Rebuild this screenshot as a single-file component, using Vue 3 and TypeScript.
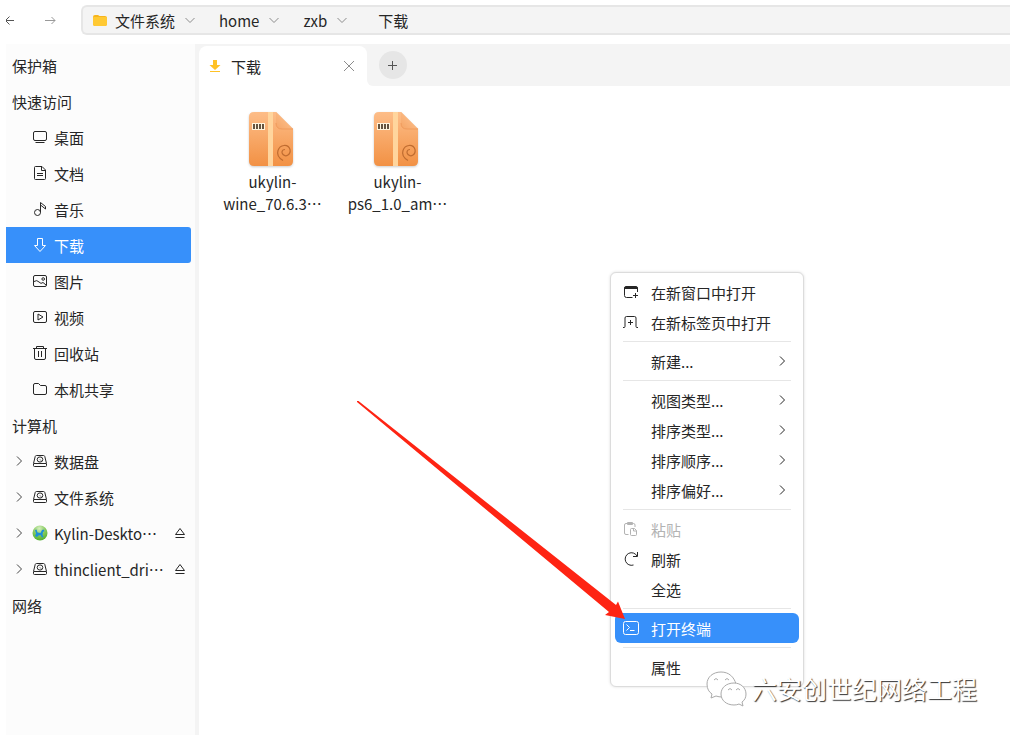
<script setup lang="ts">
interface Place {
  label: string
  icon?: string
  heading?: boolean
  active?: boolean
  expandable?: boolean
  ejectable?: boolean
}
interface MenuItem {
  label: string
  icon?: string
  submenu?: boolean
  disabled?: boolean
  active?: boolean
}

const icons: Record<string, string> = {
  desktop: 'M3 2.500h10q1.500 0 1.500 1.500v6q0 1.500-1.500 1.500H3Q1.500 11.500 1.500 10V4Q1.500 2.500 3 2.500zM3.500 13.500h9',
  document: 'M3.500 1.500H10l3.500 3.500v8.500q0 1-1 1h-9q-1 0-1-1v-11q0-1 1-1zM9.500 1.500v4h4M5 8.500h6M5 10.500h6',
  music: 'M8.500 11.500V1.500l5 4v2.500l-5-4M8.500 11.500a3 3 0 1 1-6 0a3 3 0 1 1 6 0z',
  download: 'M5.500 1.500h5v7h3L8 14.500 2.500 8.500h3z',
  picture: 'M3 2.500h10q1.500 0 1.500 1.500v8q0 1.500-1.500 1.500H3Q1.500 13.500 1.500 12V4Q1.500 2.500 3 2.500zM2 8.500q3-2 5 .5t4 .5l3 2.500M12.500 6a1.300 1.300 0 1 1-2.600 0a1.300 1.300 0 1 1 2.600 0z',
  video: 'M3 2.500h10q1.500 0 1.500 1.500v8q0 1.500-1.500 1.500H3Q1.500 13.500 1.500 12V4Q1.500 2.500 3 2.500zM6 5v6l5-3z',
  trash: 'M1 3.500h14M4.500 3.500v-2h7v2M2.500 3.500v9.500q0 1.500 1.500 1.500h8q1.500 0 1.500-1.500V3.500M6.500 6v6M9.500 6v6',
  folder: 'M3 2.500h3.500l2 2H13q1.500 0 1.500 1.500v6q0 1.500-1.500 1.500H3Q1.500 13.500 1.500 12V4Q1.500 2.500 3 2.500z',
  disk: 'M4.500 2.500h7q1 0 1.300 1l1.700 7v2q0 1-1 1h-11q-1 0-1-1v-2l1.700-7q.3-1 1.300-1zM2 10.500h12M10.800 6.500a2.800 2.600 0 1 1-5.600 0a2.800 2.600 0 1 1 5.600 0zM8 6.500l1 1',
  window: 'M9.500 13.500H3.500q-2 0-2-2V4q0-1.500 1.500-1.500h10q1.500 0 1.500 1.500v4M1.500 3.500h13M1.500 4.500h13M10 11.500h5M12.500 9v5',
  tab: 'M0 13.500h1q1 0 1-1V4q0-1.500 1.500-1.500h8q1.500 0 1.500 1.500v8.500q0 1 1 1h1M5 8.500h5M7.500 6v5',
  paste: 'M5.500 13.500h-2.500q-1.500 0-1.500-1.500V4q0-1.500 1.500-1.500h7.500q1.500 0 1.500 1.500v2M4.500 1.500h5v2h-5zM8.500 7.500h3l2 2v4q0 1-1 1h-4q-1 0-1-1v-5q0-1 1-1zM10.500 7.500v2.500h3',
  refresh: 'M14.500 1v4.500h-4.500M14 5A6.300 6.300 0 1 0 10.500 14',
  terminal: 'M2.500 1.500h11q2 0 2 2v9q0 2-2 2h-11q-2 0-2-2v-9q0-2 2-2zM3.500 4.500l3 3-3 3M7 10.500h4.500',
}

const places: Place[] = [
  { label: '保护箱', heading: true },
  { label: '快速访问', heading: true },
  { label: '桌面', icon: 'desktop' },
  { label: '文档', icon: 'document' },
  { label: '音乐', icon: 'music' },
  { label: '下载', icon: 'download', active: true },
  { label: '图片', icon: 'picture' },
  { label: '视频', icon: 'video' },
  { label: '回收站', icon: 'trash' },
  { label: '本机共享', icon: 'folder' },
  { label: '计算机', heading: true },
  { label: '数据盘', icon: 'disk', expandable: true },
  { label: '文件系统', icon: 'disk', expandable: true },
  { label: 'Kylin-Deskto\u2026', icon: 'globe', expandable: true, ejectable: true },
  { label: 'thinclient_dri\u2026', icon: 'disk', expandable: true, ejectable: true },
  { label: '网络', heading: true },
]

const crumbs = ['文件系统', 'home', 'zxb', '下载']
const files = [
  ['ukylin-', 'wine_70.6.3\u2026'],
  ['ukylin-', 'ps6_1.0_am\u2026'],
]

const menuGroups: MenuItem[][] = [
  [{ label: '在新窗口中打开', icon: 'window' }, { label: '在新标签页中打开', icon: 'tab' }],
  [{ label: '新建...', submenu: true }],
  [
    { label: '视图类型...', submenu: true },
    { label: '排序类型...', submenu: true },
    { label: '排序顺序...', submenu: true },
    { label: '排序偏好...', submenu: true },
  ],
  [{ label: '粘贴', icon: 'paste', disabled: true }, { label: '刷新', icon: 'refresh' }, { label: '全选' }],
  [{ label: '打开终端', icon: 'terminal', active: true }],
  [{ label: '属性' }],
]
</script>

<template>
  <div class="window" lang="zh-CN">
    <header class="toolbar">
      <button class="nav-button back" aria-label="后退">
        <svg class="icon" viewBox="0 0 16 16"><path d="M12 8.500H4M7.500 4.500L4 8M4 9l3.500 3.500" /></svg>
      </button>
      <button class="nav-button forward" aria-label="前进">
        <svg class="icon" viewBox="0 0 16 16"><path d="M3 8.500h10M9.500 5l3.500 3.500L9.500 12" /></svg>
      </button>
      <nav class="address" aria-label="路径">
        <svg class="icon folder-icon" viewBox="0 0 16 16">
          <path d="M1 5q0-2 2-2h3l1.500 1H13q2 0 2 2v6q0 2-2 2H3q-2 0-2-2z" fill="#f7b51c" />
          <path d="M1 6q0-1 1-1h12q1 0 1 1v6q0 2-2 2H3q-2 0-2-2z" fill="#ffc933" />
        </svg>
        <template v-for="(crumb, i) in crumbs" :key="crumb">
          <button class="crumb">{{ crumb }}</button>
          <svg v-if="i < crumbs.length - 1" class="icon crumb-arrow" viewBox="0 0 16 16"><path d="M3.500 6L8 10.500 12.500 6" /></svg>
        </template>
      </nav>
    </header>

    <div class="body">
      <nav class="sidebar" aria-label="位置">
        <div v-for="place in places" :key="place.label" class="place" :class="{ active: place.active, heading: place.heading }">
          <span v-if="!place.heading" class="expander">
            <svg v-if="place.expandable" class="icon" viewBox="0 0 16 16"><path d="M6 3.500L10.500 8 6 12.500" /></svg>
          </span>
          <button class="place-button">
            <svg v-if="place.icon === 'globe'" class="icon globe" viewBox="0 0 16 16">
              <defs>
                <radialGradient id="globe-fill" cx="45%" cy="20%" r="85%">
                  <stop offset="0" stop-color="#d5efc0" />
                  <stop offset="0.500" stop-color="#84c95a" />
                  <stop offset="1" stop-color="#4cae2b" />
                </radialGradient>
              </defs>
              <circle cx="8" cy="8" r="7.500" fill="url(#globe-fill)" />
              <path d="M3 5l1.500-.5 1 3 3 .5 1.500-3 1.500-.5 1 1.500-1.500 1-.5 3 1 2-1.500.5-1.500-2.500-2 .5-1.500 1.500-2-1 1-2.500z" fill="#1c8fd6" />
            </svg>
            <svg v-else-if="place.icon" class="icon" viewBox="0 0 16 16"><path :d="icons[place.icon]" /></svg>
            <span>{{ place.label }}</span>
          </button>
          <button v-if="place.ejectable" class="eject" aria-label="弹出">
            <svg class="icon" viewBox="0 0 16 16"><path d="M8 3.500L3.500 9.500h9zM3.500 12.500h9" /></svg>
          </button>
        </div>
      </nav>

      <main class="content">
        <div class="tabs">
          <div class="tab">
            <svg class="icon" viewBox="0 0 16 16"><path d="M6 2h4v5h3.500L8 12 2.500 7H6zM3 13h10v1H3z" fill="#ffc226" stroke="none" /></svg>
            <span class="tab-title">下载</span>
            <button class="close" aria-label="关闭标签页">
              <svg class="icon" viewBox="0 0 16 16"><path d="M3 3l10 10M13 3L3 13" /></svg>
            </button>
          </div>
          <div class="tab-rest">
            <button class="add" aria-label="新建标签页">
              <svg class="icon" viewBox="0 0 16 16"><path d="M3 8.500h9M7.500 4v9" /></svg>
            </button>
          </div>
        </div>

        <div class="files">
          <button v-for="file in files" :key="file[1]" class="file">
            <svg class="package" viewBox="0 0 48 58">
              <defs>
                <linearGradient id="box" x1="0" y1="0" x2="0" y2="1">
                  <stop offset="0" stop-color="#fdbd88" />
                  <stop offset="1" stop-color="#f29144" />
                </linearGradient>
                <linearGradient id="fold" x1="0" y1="1" x2="1" y2="0">
                  <stop offset="0" stop-color="#f5a566" />
                  <stop offset="1" stop-color="#ffc797" />
                </linearGradient>
              </defs>
              <path class="package-body" d="M7 1h22l17 17v32q0 5-5 5H7q-5 0-5-5V6q0-5 5-5z" fill="url(#box)" />
              <path d="M21 1h5v54h-5z" fill="#ffd59d" />
              <path d="M29 1l17 17H34q-5 0-5-5z" fill="url(#fold)" />
              <path d="M29 12q0 6 6 6h11" fill="none" stroke="#f09b5c" stroke-width="1" />
              <path d="M5 12h13v7H5z" fill="#fff3dc" />
              <path d="M7 13v5M10 13v5M13 13v5M16 13v5" stroke="#65533f" stroke-width="2" />
              <path d="M36 49.500c-5-3-6-7-5-10c2-6 10-7 12-1c1 5-4 8-7 5c-2-2-1-5 2-5" fill="none" stroke="#bf6c30" stroke-width="1.200" />
            </svg>
            <span v-for="line in file" :key="line" class="file-name">{{ line }}</span>
          </button>
        </div>
      </main>
    </div>

    <div class="context-menu" role="menu">
      <div v-for="(group, g) in menuGroups" :key="g" class="menu-group">
        <button
          v-for="item in group"
          :key="item.label"
          class="menu-item"
          :class="{ active: item.active }"
          :disabled="item.disabled"
          role="menuitem"
        >
          <span class="menu-icon">
            <svg v-if="item.icon" class="icon" viewBox="0 0 16 16"><path :d="icons[item.icon]" /></svg>
          </span>
          <span class="menu-label">{{ item.label }}</span>
          <svg v-if="item.submenu" class="icon" viewBox="0 0 16 16"><path d="M6 3.500L10.500 8 6 12.500" /></svg>
        </button>
      </div>
    </div>

    <svg class="pointer" viewBox="0 0 270 220" aria-hidden="true">
      <path d="M0 0L1.500 0L259 204L261 200.500L268 218L248 214L252 211L0 1z" fill="#fe2413" />
    </svg>

    <div class="watermark">
      <svg class="wechat" viewBox="0 0 44 38" aria-hidden="true">
        <path d="M16 3C8 3 2 8 2 15c0 5 2 8 5 10l-1 4 5-2q3 1 6 1c0-9 6-13 14-13C29 8 24 3 16 3z" />
        <path d="M29 14c-8 0-13 5-13 11s5 11 13 11q3 0 5-1l4 2-1-4c3-2 4-5 4-8 0-6-5-11-12-11z" />
        <path d="M9 11q2-3 4 0M20 11q2-3 4 0M23 21q2-3 4 0M31 21q2-3 4 0" />
      </svg>
      <span>六安创世纪网络工程</span>
    </div>
  </div>
</template>

<style>
body {
  margin: 0;
  background: #fff;
}
</style>

<style scoped>
.window {
  position: relative;
  display: flex;
  flex-direction: column;
  min-height: 100vh;
  overflow: hidden;
  color: #262626;
  font-family: "Noto Sans CJK SC", "Noto Sans", sans-serif;
  font-size: 15px;
  line-height: 22px;
}
button {
  margin: 0;
  padding: 0;
  border: 0;
  background: none;
  color: inherit;
  font: inherit;
  text-align: left;
  white-space: nowrap;
}
.icon {
  display: block;
  flex: none;
  width: 16px;
  height: 16px;
  fill: none;
  stroke: currentColor;
  stroke-width: 1;
}
.toolbar {
  display: flex;
  align-items: flex-start;
  height: 44px;
}
.nav-button {
  margin-top: 12px;
}
.back {
  margin-left: 2px;
  color: #555;
}
.forward {
  margin-left: 24px;
  color: #999;
}
.address {
  display: flex;
  flex: 1;
  align-items: center;
  box-sizing: border-box;
  height: 30px;
  margin-top: 5px;
  margin-left: 23px;
  padding-left: 9px;
  border: 2px solid #e6e6e6;
  border-right: 0;
  border-radius: 6px 0 0 6px;
  background: #f4f4f4;
}
.folder-icon {
  stroke: none;
  margin-right: 7px;
}
.crumb {
  padding-top: 2px;
}
.crumb:last-child {
  margin-left: 7px;
}
.crumb-arrow {
  margin: 0 21px 0 7px;
  color: #8c8c8c;
}
.body {
  display: flex;
  flex: 1;
}
.sidebar {
  flex: none;
  box-sizing: border-box;
  width: 193px;
  margin-left: 6px;
  padding: 3px 4px 0 0;
  border-right: 4px solid #f4f4f4;
  background: #fcfcfc;
}
.place {
  display: flex;
  align-items: center;
  height: 36px;
  border-radius: 0 3px 3px 0;
}
.heading {
  padding-left: 6px;
}
.place.active {
  color: #fff;
  background: #3790fa;
}
.expander {
  width: 21px;
  padding-left: 5px;
  color: #444;
}
.place-button {
  display: flex;
  flex: 1;
  align-items: center;
  gap: 6px;
}
.place-button span {
  padding-top: 2px;
}
.globe {
  stroke: none;
}
.eject {
  margin-right: 3px;
}
.content {
  flex: 1;
  min-width: 0;
}
.tabs {
  display: flex;
  height: 42px;
  background: linear-gradient(#f4f4f4 50%, #fff 50%);
}
.tab {
  display: flex;
  align-items: center;
  box-sizing: border-box;
  width: 168px;
  margin-top: 2px;
  padding: 0 10px 0 8px;
  border-radius: 8px 8px 0 0;
  background: #fff;
}
.tab-title {
  flex: 1;
  padding: 2px 0 0 8px;
}
.close {
  color: #8c8c8c;
}
.tab-rest {
  display: flex;
  flex: 1;
  align-items: center;
  padding-left: 12px;
  border-bottom-left-radius: 6px;
  background: #f4f4f4;
}
.add {
  display: flex;
  align-items: center;
  justify-content: center;
  width: 28px;
  height: 28px;
  border-radius: 50%;
  background: #e6e6e6;
  color: #555;
}
.files {
  display: flex;
  gap: 5px;
  padding: 25px 12px;
}
.file {
  display: flex;
  flex-direction: column;
  align-items: center;
  width: 120px;
}
.package {
  width: 48px;
  height: 58px;
  margin-bottom: 2px;
}
.package-body {
  filter: drop-shadow(0 1px 1px #0003);
}
.file-name {
  padding-left: 3px;
}
.context-menu {
  position: absolute;
  top: 272px;
  left: 610px;
  box-sizing: border-box;
  width: 194px;
  padding: 4px;
  border: 1px solid #dcdcdc;
  border-radius: 6px;
  background: #fff;
  box-shadow: 0 0 3px #0002;
}
.menu-group + .menu-group::before {
  display: block;
  height: 1px;
  margin: 4px 8px;
  background: #e6e6e6;
  content: "";
}
.menu-item {
  display: flex;
  align-items: center;
  box-sizing: border-box;
  width: 100%;
  height: 30px;
  padding: 0 9px 0 8px;
  border-radius: 6px;
}
.menu-item:disabled {
  color: #b3b3b3;
}
.menu-item.active {
  color: #fff;
  background: #3790fa;
}
.menu-icon {
  width: 28px;
}
.menu-label {
  flex: 1;
  padding-top: 2px;
}
.pointer {
  position: absolute;
  top: 401px;
  left: 357px;
  width: 270px;
  height: 220px;
}
.watermark {
  position: absolute;
  top: 669px;
  left: 705px;
  display: flex;
  align-items: center;
  gap: 3px;
  color: #fff;
  font-size: 25px;
  line-height: 38px;
  text-shadow: 1px 1px 1px #333;
  white-space: nowrap;
}
.wechat {
  width: 44px;
  height: 38px;
  fill: #fff;
  stroke: #aaa;
  stroke-width: 1;
}
</style>
